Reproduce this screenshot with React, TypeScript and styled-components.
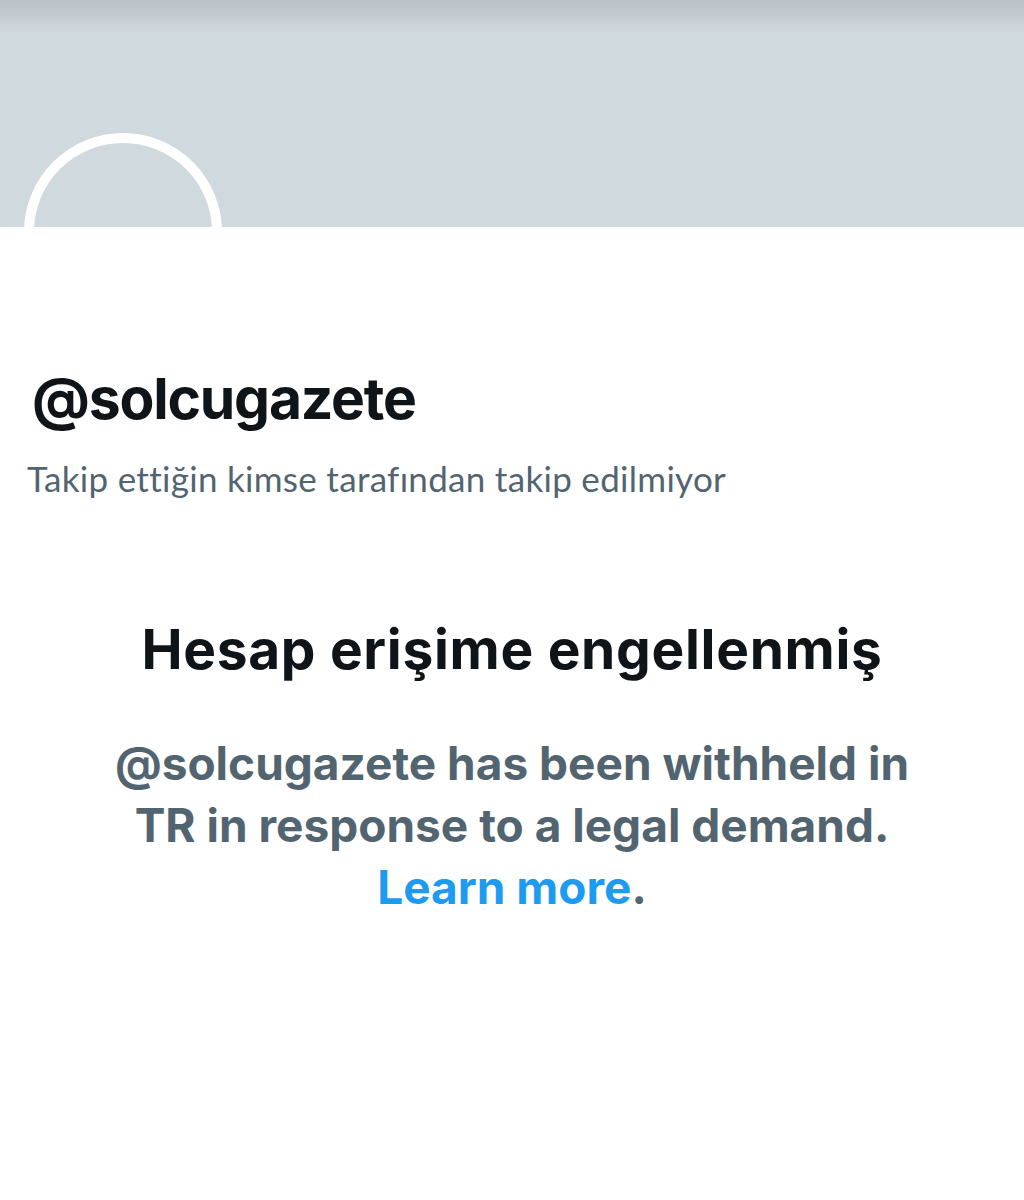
import React from 'react';
import styled, {createGlobalStyle} from 'styled-components';

const GlobalStyle = createGlobalStyle`
    html, body {
        margin: 0;
        padding: 0;
        background: #ffffff;
    }
    body {
        font-family: Inter, Lato, sans-serif;
        color: #0f1419;
    }
`;

const Page = styled.div`
    width: 1024px;
    min-height: 1200px;
    background: #ffffff;
`;

const Banner = styled.div`
    position: relative;
    height: 227px;
    overflow: hidden;
    background: linear-gradient(to bottom, #b9c1c7 0px, #c6ced3 18px, #cfd9de 32px, #cfd9de 100%);
`;

// avatar hangs over the banner edge; the part below is hidden
const Avatar = styled.div`
    position: absolute;
    left: 24px;
    top: 133px;
    width: 178px;
    height: 178px;
    border-radius: 50%;
    border: 10px solid #ffffff;
    background: #cfd9de;
`;

const Profile = styled.div`
    display: flex;
    flex-direction: column;
    padding: 142px 26px 0;
`;

const Handle = styled.h1`
    margin: 0 0 0 6px;
    font-size: 57px;
    line-height: 60px;
    font-weight: 700;
    letter-spacing: -1.2px;
    color: #0f1419;
`;

const FollowNote = styled.p`
    margin: 29px 0 0 1px;
    font-family: Lato, sans-serif;
    font-size: 35px;
    line-height: 40px;
    font-weight: 400;
    letter-spacing: 0.3px;
    color: #536471;
`;

const Withheld = styled.section`
    display: flex;
    flex-direction: column;
    align-items: center;
    text-align: center;
    padding: 119px 40px 0;
`;

const Title = styled.h2`
    margin: 0;
    font-size: 55px;
    line-height: 64px;
    font-weight: 700;
    letter-spacing: 0.7px;
    color: #0f1419;
`;

const Message = styled.p`
    margin: 51px 0 0;
    font-size: 46px;
    line-height: 62px;
    font-weight: 700;
    color: #536471;
`;

const Link = styled.a`
    color: #1d9bf0;
    text-decoration: none;
`;

export default function App() {
    return (
        <Page>
            <GlobalStyle/>
            <Banner>
                <Avatar/>
            </Banner>
            <Profile>
                <Handle>@solcugazete</Handle>
                <FollowNote>Takip ettiğin kimse tarafından takip edilmiyor</FollowNote>
            </Profile>
            <Withheld>
                <Title>Hesap erişime engellenmiş</Title>
                <Message>
                    @solcugazete has been withheld in<br/>
                    TR in response to a legal demand.<br/>
                    <Link href='#'>Learn more</Link>.
                </Message>
            </Withheld>
        </Page>
    );
}
